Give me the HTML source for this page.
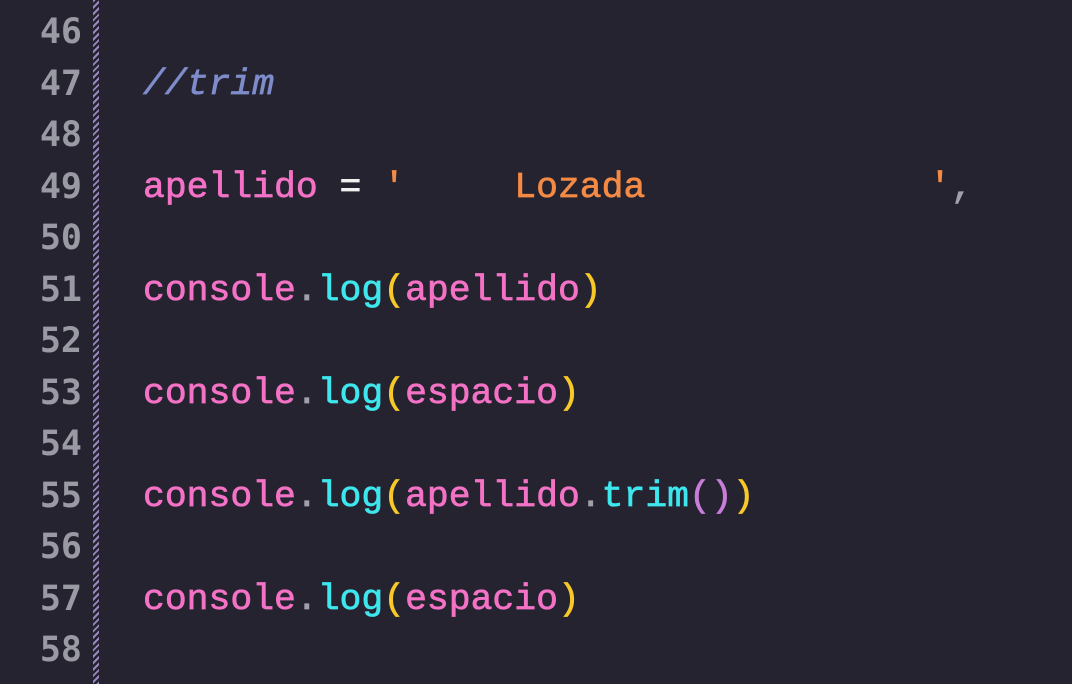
<!DOCTYPE html>
<html><head><meta charset="utf-8"><style>
html,body{margin:0;padding:0;width:1072px;height:684px;overflow:hidden;background:#25232f;}
.g{position:absolute;left:93px;top:0;width:6px;height:684px;background:repeating-linear-gradient(135deg,#9a86c0 0 2px,#25232f 2px 4.5px);}
.ln{position:absolute;left:0;width:82px;text-align:right;font:bold 35px/51.5px "DejaVu Sans Mono","Liberation Mono",monospace;color:#9a9aa4;top:7px;}
.code{position:absolute;left:143px;top:7px;font:36.4px/51.5px "Liberation Mono","DejaVu Sans Mono",monospace;white-space:pre;color:#f472c6;-webkit-text-stroke:0.7px currentColor;}
.c{color:#7f8ccc;font-style:italic}
.w{color:#f0f0f0}.o{color:#f58a45}.d{color:#a0a0a8}.y{color:#f7c928}.b{color:#3ee6ee}.p{color:#f472c6}.v{color:#c77dd9}
</style></head><body>
<div class="g"></div>
<div class="ln">46<br>47<br>48<br>49<br>50<br>51<br>52<br>53<br>54<br>55<br>56<br>57<br>58</div>
<div class="code">
<span class="c">//trim</span>

apellido <span class="w">=</span> <span class="o">'     Lozada             '</span><span class="d">,</span>

console<span class="d">.</span><span class="b">log</span><span class="y">(</span>apellido<span class="y">)</span>

console<span class="d">.</span><span class="b">log</span><span class="y">(</span>espacio<span class="y">)</span>

console<span class="d">.</span><span class="b">log</span><span class="y">(</span>apellido<span class="d">.</span><span class="b">trim</span><span class="v">()</span><span class="y">)</span>

console<span class="d">.</span><span class="b">log</span><span class="y">(</span>espacio<span class="y">)</span>
</div>
</body></html>
